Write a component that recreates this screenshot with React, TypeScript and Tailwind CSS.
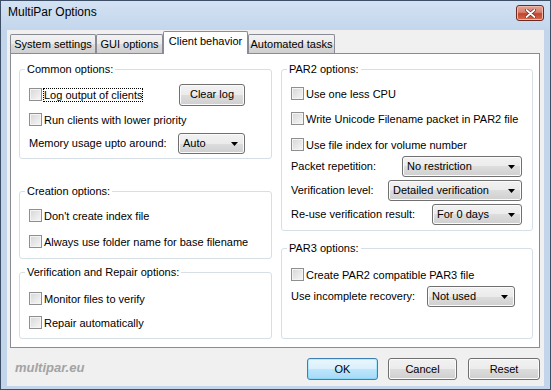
import React from "react";

const BTN_BG =
  "bg-[linear-gradient(#f2f2f2,#ebebeb_50%,#dddddd_50%,#cfcfcf)] shadow-[inset_0_0_0_1px_#fbfbfb]";

function Arrow() {
  return (
    <svg width="7" height="4" viewBox="0 0 7 4" className="shrink-0">
      <path d="M0 0h7L3.5 4z" fill="#000" />
    </svg>
  );
}

function Box() {
  return (
    <span className="w-[13px] h-[13px] shrink-0 border border-[#8e8f8f] bg-[linear-gradient(135deg,#d6d6d6,#f7f7f7)] shadow-[inset_0_0_0_1px_#f4f4f4]" />
  );
}

function Check({ label, focus = false, className = "" }: { label: string; focus?: boolean; className?: string }) {
  return (
    <div className={`flex items-center gap-[1px] pl-[9px] h-[17px] ${className}`}>
      <Box />
      <span
        className={`leading-[12px] border ${
          focus ? "border-dotted border-black" : "border-transparent"
        }`}
      >
        {label}
      </span>
    </div>
  );
}

function Select({ value, w }: { value: string; w: string }) {
  return (
    <div
      className={`${w} h-[21px] ml-auto shrink-0 rounded-[3px] border border-[#707070] ${BTN_BG} flex items-center justify-between pl-[4px] pr-[6px]`}
    >
      <span>{value}</span>
      <Arrow />
    </div>
  );
}

function Button({ label, w, primary = false }: { label: string; w: string; primary?: boolean }) {
  return (
    <div
      className={`${w} h-[22px] rounded-[3px] border flex items-center justify-center ${
        primary
          ? "border-[#3c7fb1] bg-[linear-gradient(#eaf6fd,#d9f0fc_50%,#bee6fd_50%,#a7d9f5)] shadow-[inset_0_0_0_1px_#48d4fb55]"
          : `border-[#707070] ${BTN_BG}`
      }`}
    >
      {label}
    </div>
  );
}

function Group({ title, h, className = "", children }: { title: string; h: string; className?: string; children: React.ReactNode }) {
  return (
    <fieldset className={`${h} min-w-0 border border-[#d5dfe5] rounded-[3px] flex flex-col ${className}`}>
      <legend className="ml-[5px] px-[2px] leading-[13px]">{title}</legend>
      {children}
    </fieldset>
  );
}

function Tab({ label, w, active = false }: { label: string; w: string; active?: boolean }) {
  return active ? (
    <div className={`${w} h-[23px] -mb-px relative z-10 bg-white border border-b-0 border-[#898c95] rounded-t-[2px] flex items-start justify-center pt-[3px]`}>
      {label}
    </div>
  ) : (
    <div className={`${w} h-[19px] border border-b-0 border-[#898c95] rounded-t-[2px] bg-[linear-gradient(#f2f2f2,#ebebeb_50%,#dddddd_50%,#cfcfcf)] flex items-center justify-center`}>
      {label}
    </div>
  );
}

export default function App() {
  return (
    <div className="w-[551px] h-[390px] flex flex-col border border-[#3d4f66] bg-[#c2d5eb] text-[11px] leading-[13px] text-black font-['Liberation_Sans',Arial,sans-serif] overflow-hidden">
      {/* Title bar */}
      <div className="h-[29px] shrink-0 flex items-start pl-[7px] pr-[6px] bg-[linear-gradient(#d3e2f3,#c3d6ec)]">
        <span className="mt-[4px] text-[12px] leading-[15px]">MultiPar Options</span>
        <div className="ml-auto mt-[4px] w-[28px] h-[16px] rounded-[3px] border border-[#6d2a20] bg-[linear-gradient(#e4a498,#d6806d_45%,#c2432c_55%,#d46e50)] shadow-[inset_0_0_0_1px_#f0b9ad] flex items-center justify-center">
          <svg width="11" height="9" viewBox="0 0 11 9">
            <path d="M1.5 1l8 7M9.5 1l-8 7" stroke="#6b2419" strokeWidth="3.2" strokeLinecap="round" />
            <path d="M1.5 1l8 7M9.5 1l-8 7" stroke="#fff" strokeWidth="1.8" strokeLinecap="round" />
          </svg>
        </div>
      </div>

      {/* Client area */}
      <div className="flex-1 mx-[6px] bg-[#f0f0f0] flex flex-col">
        <div className="h-[23px] shrink-0 flex items-end pl-[3px]">
          <Tab label="System settings" w="w-[86px]" />
          <Tab label="GUI options" w="w-[67px]" />
          <Tab label="Client behavior" w="w-[85px]" active />
          <Tab label="Automated tasks" w="w-[87px]" />
        </div>

        <div className="w-[530px] h-[295px] ml-[3px] shrink-0 border border-[#898c95] bg-white flex gap-[9px] pl-[8px] pt-[9px]">
          {/* Left column */}
          <div className="w-[253px] flex flex-col">
            <Group title="Common options:" h="h-[96px]">
              <div className="mt-[8px] h-[21px] flex items-center pr-[26px]">
                <Check label="Log output of clients" focus />
                <Button label="Clear log" w="w-[66px] ml-auto" />
              </div>
              <div className="mt-[4px] h-[21px] flex items-center">
                <Check label="Run clients with lower priority" />
              </div>
              <div className="mt-[3px] h-[21px] flex items-center pl-[9px] pr-[26px]">
                <span>Memory usage upto around:</span>
                <Select value="Auto" w="w-[67px]" />
              </div>
            </Group>

            <Group title="Creation options:" h="h-[74px]" className="mt-[26px]">
              <Check label="Don't create index file" className="mt-[9px]" />
              <Check label="Always use folder name for base filename" className="mt-[9px]" />
            </Group>

            <Group title="Verification and Repair options:" h="h-[73px]" className="mt-[7px]">
              <Check label="Monitor files to verify" className="mt-[11px]" />
              <Check label="Repair automatically" className="mt-[7px]" />
            </Group>
          </div>

          {/* Right column */}
          <div className="w-[252px] flex flex-col">
            <Group title="PAR2 options:" h="h-[168px]">
              <Check label="Use one less CPU" className="mt-[9px]" />
              <Check label="Write Unicode Filename packet in PAR2 file" className="mt-[8px]" />
              <Check label="Use file index for volume number" className="mt-[9px]" />
              <div className="mt-[3px] h-[21px] flex items-center pl-[9px] pr-[10px]">
                <span>Packet repetition:</span>
                <Select value="No restriction" w="w-[120px]" />
              </div>
              <div className="mt-[3px] h-[21px] flex items-center pl-[9px] pr-[10px]">
                <span>Verification level:</span>
                <Select value="Detailed verification" w="w-[134px]" />
              </div>
              <div className="mt-[3px] h-[21px] flex items-center pl-[9px] pr-[10px]">
                <span>Re-use verification result:</span>
                <Select value="For 0 days" w="w-[90px]" />
              </div>
            </Group>

            <Group title="PAR3 options:" h="h-[97px]" className="mt-[11px]">
              <Check label="Create PAR2 compatible PAR3 file" className="mt-[11px]" />
              <div className="mt-[3px] h-[21px] flex items-center pl-[9px] pr-[17px]">
                <span>Use incomplete recovery:</span>
                <Select value="Not used" w="w-[88px]" />
              </div>
            </Group>
          </div>
        </div>

        {/* Footer */}
        <div className="flex-1 flex items-start pl-[8px] pr-[4px]">
          <span className="mt-[12px] text-[13px] leading-[15px] font-bold italic text-[#a3a3a3]">multipar.eu</span>
          <div className="ml-auto mt-[10px] flex">
            <Button label="OK" w="w-[71px]" primary />
            <Button label="Cancel" w="w-[69px] ml-[10px]" />
            <Button label="Reset" w="w-[72px] ml-[11px]" />
          </div>
        </div>
      </div>
      <div className="h-[3px] shrink-0" />
    </div>
  );
}
